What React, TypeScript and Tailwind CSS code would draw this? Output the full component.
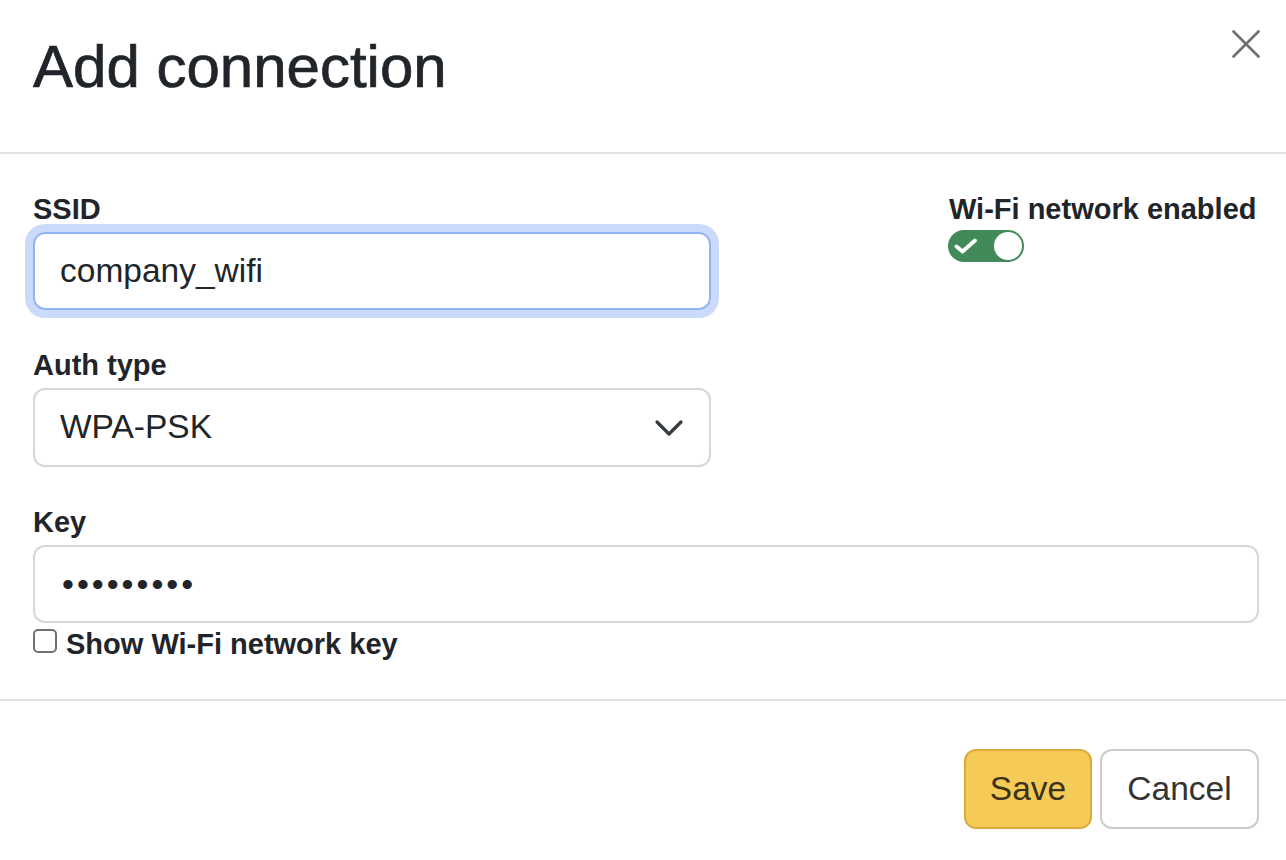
import React from "react";

const font = { fontFamily: '"Liberation Sans", Arial, sans-serif' };

export default function App() {
  return (
    <div
      className="w-[1286px] h-[860px] bg-white text-[#212529] overflow-hidden"
      style={font}
    >
      {/* Header */}
      <div className="h-[154px] border-b-2 border-[#dee2e6] pl-[33px] pr-[26px] pt-[31px] flex items-start justify-between">
        <h1 className="text-[60px] leading-[72px] font-medium [-webkit-text-stroke:0.7px_#212529]">
          Add connection
        </h1>
        <svg
          width="28"
          height="28"
          viewBox="0 0 28 28"
          className="mt-[-1px]"
          aria-label="Close"
        >
          <path
            d="M1.5 1.5 L26.5 26.5 M26.5 1.5 L1.5 26.5"
            stroke="#6f6f6f"
            strokeWidth="2.6"
            strokeLinecap="round"
          />
        </svg>
      </div>

      {/* Body */}
      <div className="pl-[33px] pr-[27px] pt-[34px] pb-[34px] border-b-2 border-[#dee2e6]">
        <div className="flex justify-between">
          <div className="w-[678px] flex flex-col">
            <label className="text-[29px] leading-[42px] font-bold mb-[2px]">
              SSID
            </label>
            <div className="h-[78px] rounded-[12px] border-2 border-[#8fb3f7] ring-[8px] ring-[#cbdafb] flex items-center pl-[25px] text-[33.5px]">
              company_wifi
            </div>

            <label className="text-[29px] leading-[42px] font-bold mb-[2px] mt-[34px]">
              Auth type
            </label>
            <div className="h-[79px] rounded-[12px] border-2 border-[#d4d7db] flex items-center justify-between pl-[25px] pr-[24px] text-[33.5px]">
              <span>WPA-PSK</span>
              <svg width="32" height="32" viewBox="0 0 16 16">
                <path
                  d="m2 5 6 6 6-6"
                  fill="none"
                  stroke="#343a40"
                  strokeWidth="1.6"
                  strokeLinecap="round"
                  strokeLinejoin="round"
                />
              </svg>
            </div>
          </div>

          <div className="w-[310px] flex flex-col items-start">
            <span className="text-[29px] leading-[42px] font-bold">
              Wi-Fi network enabled
            </span>
            <div className="w-[76px] h-[32px] rounded-full bg-[#428a59] flex items-center justify-between pl-[6px] pr-[2px] ml-[-1px]">
              <svg width="24" height="16" viewBox="0 0 24 16">
                <path
                  d="M2.5 8.5 L8.5 13.5 L21 2.5"
                  fill="none"
                  stroke="white"
                  strokeWidth="3.8"
                  strokeLinecap="round"
                  strokeLinejoin="round"
                />
              </svg>
              <div className="w-[28px] h-[28px] rounded-full bg-white"></div>
            </div>
          </div>
        </div>

        <label className="block text-[29px] leading-[42px] font-bold mb-[2px] mt-[34px]">
          Key
        </label>
        <div className="h-[78px] rounded-[12px] border-2 border-[#d4d7db] flex items-center pl-[27px] text-[34px] tracking-[3px]">
          •••••••••
        </div>
        <div className="flex items-start gap-[9px]">
          <div className="mt-[6px] w-[24px] h-[24px] rounded-[5px] border-2 border-[#707070] bg-white"></div>
          <span className="text-[29px] leading-[42px] font-bold">
            Show Wi-Fi network key
          </span>
        </div>
      </div>

      {/* Footer */}
      <div className="pr-[27px] pt-[48px] flex justify-end gap-[8px]">
        <button className="w-[128px] h-[80px] rounded-[12px] bg-[#f6ca57] border-2 border-[#d9ab3f] text-[33.5px] text-[#3b3218]">
          Save
        </button>
        <button className="w-[159px] h-[80px] rounded-[12px] bg-white border-2 border-[#cccccc] text-[33.5px] text-[#333333]">
          Cancel
        </button>
      </div>
    </div>
  );
}
